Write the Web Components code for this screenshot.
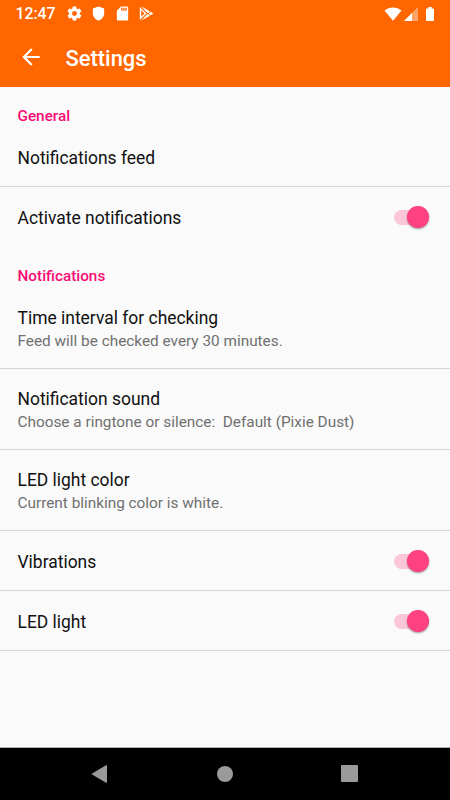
<!DOCTYPE html>
<html lang="en">
<head>
<meta charset="utf-8">
<title>Settings</title>
<style>
  :root {
    --primary: #ff6600;
    --accent: #ff4081;
    --category: #f90d74;
    --surface: #fafafa;
    --divider: #d6d6d6;
  }
  body {
    margin: 0;
    font-family: Roboto, "Liberation Sans", sans-serif;
    background: var(--surface);
  }
</style>
</head>
<body>
<settings-screen>
  <status-bar slot="top" time="12:47"></status-bar>
  <app-toolbar slot="top">Settings</app-toolbar>

  <settings-category>General</settings-category>
  <settings-row>Notifications feed</settings-row>
  <settings-row>Activate notifications<toggle-switch slot="widget"></toggle-switch></settings-row>

  <settings-category style="height: 41px">Notifications</settings-category>
  <settings-row two-line>Time interval for checking<span slot="summary">Feed will be checked every 30 minutes.</span></settings-row>
  <settings-row two-line>Notification sound<span slot="summary">Choose a ringtone or silence:&nbsp; Default (Pixie Dust)</span></settings-row>
  <settings-row two-line>LED light color<span slot="summary">Current blinking color is white.</span></settings-row>
  <settings-row>Vibrations<toggle-switch slot="widget"></toggle-switch></settings-row>
  <settings-row>LED light<toggle-switch slot="widget"></toggle-switch></settings-row>

  <navigation-bar slot="bottom"></navigation-bar>
</settings-screen>

<script>
class SettingsScreen extends HTMLElement {
  connectedCallback() {
    this.attachShadow({ mode: 'open' });
    this.shadowRoot.innerHTML = `
      <style>
        :host {
          display: flex;
          flex-direction: column;
          height: 100vh;
          overflow: hidden;
        }
        main {
          flex: 1;
          min-height: 0;
        }
      </style>
      <slot name="top"></slot>
      <main><slot></slot></main>
      <slot name="bottom"></slot>
    `;
  }
}

class StatusBar extends HTMLElement {
  connectedCallback() {
    this.attachShadow({ mode: 'open' });
    this.shadowRoot.innerHTML = `
      <style>
        :host {
          display: flex;
          justify-content: space-between;
          align-items: center;
          box-sizing: border-box;
          height: 27px;
          padding: 0 12px 0 15.500px;
          background: var(--primary);
          color: #fff;
        }
        .left, .right {
          display: flex;
          align-items: center;
        }
        .time {
          width: 50px;
          font-size: 15.800px;
          font-weight: 500;
          line-height: 27px;
        }
        .left svg {
          width: 17px;
          height: 17px;
          margin-right: 7.200px;
        }
        svg {
          display: block;
          fill: #fff;
        }
        .battery {
          margin: 0 4px 0 8px;
        }
        .signal {
          margin-left: 2px;
        }
      </style>
      <div class="left">
        <span class="time">${this.getAttribute('time')}</span>
        <svg viewBox="0 0 24 24"><path d="M19.4 13c0-.3.1-.6.1-1s0-.7-.1-1l2.1-1.600c.2-.2.2-.4.100-.6l-2-3.500c-.1-.2-.4-.3-.6-.2l-2.500 1c-.5-.4-1.100-.7-1.700-1l-.4-2.600c0-.3-.2-.5-.4-.5h-4c-.3 0-.5.2-.5.4l-.4 2.700c-.6.3-1.200.6-1.700 1l-2.500-1c-.2-.1-.5 0-.6.2l-2 3.500c-.1.2-.1.4.1.6L4.500 11c0 .3-.1.6-.1 1s0 .7.1 1l-2.100 1.600c-.2.2-.2.4-.1.6l2 3.500c.1.2.4.3.6.2l2.500-1c.5.4 1.100.7 1.700 1l.4 2.700c0 .2.2.4.5.4h4c.2 0 .4-.2.4-.4l.4-2.700c.6-.3 1.200-.6 1.700-1l2.500 1c.2.1.5 0 .6-.2l2-3.500c.1-.2.1-.4-.1-.6zM12 15.500a3.500 3.500 0 1 1 0-7 3.500 3.500 0 0 1 0 7z"/></svg>
        <svg viewBox="0 0 24 24"><path d="M12 2L4 5v6.500c0 5 3.300 8.900 8 10.500 4.700-1.600 8-5.500 8-10.500V5z"/></svg>
        <svg viewBox="0 0 24 24"><path d="M18 2h-8L4 8v12c0 1.100.9 2 2 2h12c1.100 0 2-.9 2-2V4c0-1.100-.9-2-2-2zm-6 6h-2V4h2zm3 0h-2V4h2zm3 0h-2V4h2z"/></svg>
        <svg viewBox="0 0 24 24"><path d="M2.500 2.800L12 12l-9.500 9.200zM4.200 1.800l12.600 7-3 2.700zM4.200 22.200l12.600-7-3-2.700zM17.800 9.400l4 2.600-4 2.600L15 12z"/><path d="M4.600 7.500v9L9.300 12z" fill="#ff6600"/></svg>
      </div>
      <div class="right">
        <svg width="18" height="14" viewBox="0 0 18 14"><path d="M9 13.800L.5 3.600C3 1.400 6 .5 9 .5s6 .9 8.500 3.100z"/></svg>
        <svg class="signal" width="14" height="14" viewBox="0 0 14 14"><path d="M14 0v14H0z" opacity=".4"/><path d="M8 6v8H0z"/></svg>
        <svg class="battery" width="8" height="14" viewBox="0 0 8 14"><path d="M2.300 0h3.400v1.500h1.500c.5 0 .8.300.8.800v10.900c0 .5-.3.800-.8.800H.8c-.5 0-.8-.3-.8-.8V2.300c0-.5.300-.8.800-.8h1.500z"/></svg>
      </div>
    `;
  }
}

class AppToolbar extends HTMLElement {
  connectedCallback() {
    this.attachShadow({ mode: 'open' });
    this.shadowRoot.innerHTML = `
      <style>
        :host {
          display: flex;
          align-items: center;
          box-sizing: border-box;
          height: 60px;
          padding: 0 18px;
          background: var(--primary);
          color: #fff;
        }
        svg {
          width: 26px;
          height: 26px;
          margin-right: 21.500px;
          fill: #fff;
        }
        h1 {
          margin: 3px 0 0;
          font-size: 21.900px;
          font-weight: 500;
          line-height: 28px;
        }
      </style>
      <svg viewBox="0 0 24 24"><path d="M20 11H7.830l5.590-5.590L12 4l-8 8 8 8 1.410-1.410L7.830 13H20z"/></svg>
      <h1><slot></slot></h1>
    `;
  }
}

class SettingsCategory extends HTMLElement {
  connectedCallback() {
    this.attachShadow({ mode: 'open' });
    this.shadowRoot.innerHTML = `
      <style>
        :host {
          display: block;
          box-sizing: border-box;
          height: 40px;
          padding: 20px 17.500px 0;
          color: var(--category);
          font-size: 15.300px;
          font-weight: 500;
          line-height: 19px;
        }
      </style>
      <slot></slot>
    `;
  }
}

class SettingsRow extends HTMLElement {
  connectedCallback() {
    this.attachShadow({ mode: 'open' });
    this.shadowRoot.innerHTML = `
      <style>
        :host {
          display: flex;
          align-items: center;
          justify-content: space-between;
          box-sizing: border-box;
          height: 60px;
          padding: 3px 18px 0 17.500px;
          border-bottom: 1px solid var(--divider);
        }
        :host([two-line]) {
          height: 81px;
        }
        .title {
          color: #101010;
          font-size: 17.450px;
          line-height: 23px;
        }
        .summary {
          color: #707070;
          font-size: 15.350px;
          line-height: 22px;
        }
        :host(:not([two-line])) .summary {
          display: none;
        }
        /* last row of a group has no rule under it */
        :host([no-divider]) {
          border-bottom-color: transparent;
        }
      </style>
      <div>
        <div class="title"><slot></slot></div>
        <div class="summary"><slot name="summary"></slot></div>
      </div>
      <slot name="widget"></slot>
    `;
    const next = this.nextElementSibling;
    if (next && next.localName === 'settings-category') {
      this.setAttribute('no-divider', '');
    }
  }
}

class ToggleSwitch extends HTMLElement {
  connectedCallback() {
    this.attachShadow({ mode: 'open' });
    this.shadowRoot.innerHTML = `
      <style>
        :host {
          display: flex;
          align-items: center;
          justify-content: flex-end;
          box-sizing: border-box;
          width: 35px;
          height: 15px;
          margin-right: 3px;
          margin-top: -2px;
          border-radius: 8px;
          background: #fcc6d9;
        }
        .thumb {
          flex: none;
          width: 22px;
          height: 22px;
          border-radius: 50%;
          background: var(--accent);
          box-shadow: 0 1px 2px rgba(0, 0, 0, 0.4);
        }
      </style>
      <div class="thumb"></div>
    `;
  }
}

class NavigationBar extends HTMLElement {
  connectedCallback() {
    this.attachShadow({ mode: 'open' });
    this.shadowRoot.innerHTML = `
      <style>
        :host {
          display: flex;
          align-items: center;
          justify-content: space-between;
          box-sizing: border-box;
          height: 53px;
          padding: 0 92px 1px 91px;
          border-top: 1px solid #b0b0b0;
          background: #000;
        }
        svg {
          display: block;
          fill: #9a9a9a;
        }
      </style>
      <svg width="17" height="18" viewBox="0 0 17 18"><path d="M.3 9L15 .3q1-.4 1 .6v16.200q0 1-1 .6z"/></svg>
      <svg width="16" height="16" viewBox="0 0 16 16"><circle cx="8" cy="8" r="8"/></svg>
      <svg width="17" height="17" viewBox="0 0 17 17"><rect width="17" height="17" rx="1"/></svg>
    `;
  }
}

customElements.define('settings-screen', SettingsScreen);
customElements.define('status-bar', StatusBar);
customElements.define('app-toolbar', AppToolbar);
customElements.define('settings-category', SettingsCategory);
customElements.define('settings-row', SettingsRow);
customElements.define('toggle-switch', ToggleSwitch);
customElements.define('navigation-bar', NavigationBar);
</script>
</body>
</html>
